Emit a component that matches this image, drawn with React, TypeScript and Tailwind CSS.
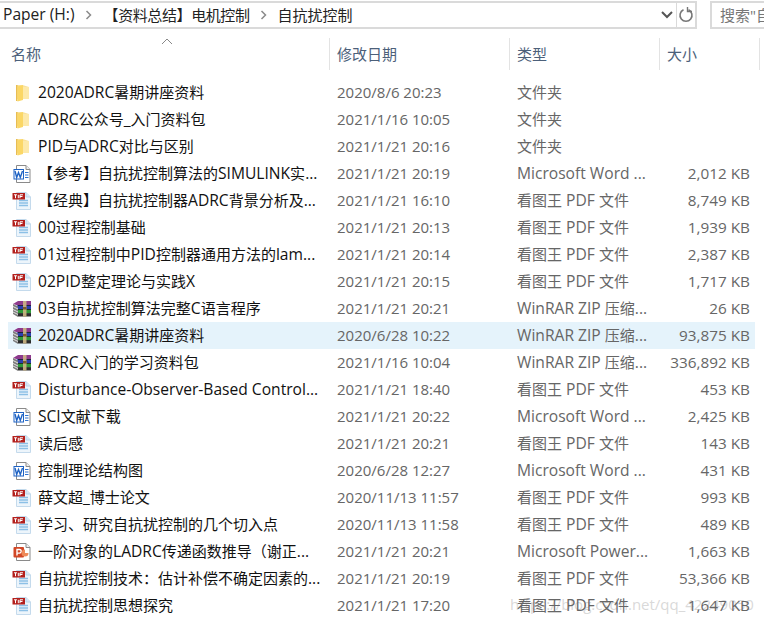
type Kind = "folder" | "word" | "pdf" | "rar" | "ppt";

interface FileRow {
  name: string;
  date: string;
  type: string;
  size?: string;
  kind: Kind;
  selected?: boolean;
}

const PDF = "看图王 PDF 文件";
const WORD = "Microsoft Word ...";
const ZIP = "WinRAR ZIP 压缩...";

const files: FileRow[] = [
  { name: "2020ADRC暑期讲座资料", date: "2020/8/6 20:23", type: "文件夹", kind: "folder" },
  { name: "ADRC公众号_入门资料包", date: "2021/1/16 10:05", type: "文件夹", kind: "folder" },
  { name: "PID与ADRC对比与区别", date: "2021/1/21 20:16", type: "文件夹", kind: "folder" },
  { name: "【参考】自抗扰控制算法的SIMULINK实...", date: "2021/1/21 20:19", type: WORD, size: "2,012 KB", kind: "word" },
  { name: "【经典】自抗扰控制器ADRC背景分析及...", date: "2021/1/21 16:10", type: PDF, size: "8,749 KB", kind: "pdf" },
  { name: "00过程控制基础", date: "2021/1/21 20:13", type: PDF, size: "1,939 KB", kind: "pdf" },
  { name: "01过程控制中PID控制器通用方法的lam...", date: "2021/1/21 20:14", type: PDF, size: "2,387 KB", kind: "pdf" },
  { name: "02PID整定理论与实践X", date: "2021/1/21 20:15", type: PDF, size: "1,717 KB", kind: "pdf" },
  { name: "03自抗扰控制算法完整C语言程序", date: "2021/1/21 20:21", type: ZIP, size: "26 KB", kind: "rar" },
  { name: "2020ADRC暑期讲座资料", date: "2020/6/28 10:22", type: ZIP, size: "93,875 KB", kind: "rar", selected: true },
  { name: "ADRC入门的学习资料包", date: "2021/1/16 10:04", type: ZIP, size: "336,892 KB", kind: "rar" },
  { name: "Disturbance-Observer-Based Control...", date: "2021/1/21 18:40", type: PDF, size: "453 KB", kind: "pdf" },
  { name: "SCI文献下载", date: "2021/1/21 20:22", type: WORD, size: "2,425 KB", kind: "word" },
  { name: "读后感", date: "2021/1/21 20:21", type: PDF, size: "143 KB", kind: "pdf" },
  { name: "控制理论结构图", date: "2020/6/28 12:27", type: WORD, size: "431 KB", kind: "word" },
  { name: "薛文超_博士论文", date: "2020/11/13 11:57", type: PDF, size: "993 KB", kind: "pdf" },
  { name: "学习、研究自抗扰控制的几个切入点", date: "2020/11/13 11:58", type: PDF, size: "489 KB", kind: "pdf" },
  { name: "一阶对象的LADRC传递函数推导（谢正...", date: "2021/1/21 20:21", type: "Microsoft Power...", size: "1,663 KB", kind: "ppt" },
  { name: "自抗扰控制技术：估计补偿不确定因素的...", date: "2021/1/21 20:19", type: PDF, size: "53,366 KB", kind: "pdf" },
  { name: "自抗扰控制思想探究", date: "2021/1/21 17:20", type: PDF, size: "1,647 KB", kind: "pdf" },
];

// latin runs sit a little wider than the CJK ones in the original UI font
function Mixed({ text }: { text: string }) {
  const parts = text.split(/([\x20-\x7e]+)/).filter(Boolean);
  return (
    <span>
      {parts.map((p, i) =>
        /^[\x20-\x7e]/.test(p) ? (
          <span key={i} className="text-[15.6px]">
            {p}
          </span>
        ) : (
          <span key={i}>{p}</span>
        ),
      )}
    </span>
  );
}

function FileIcon({ kind }: { kind: Kind }) {
  if (kind === "folder") {
    return (
      <svg width="20" height="20" viewBox="0 0 20 20">
        <path d="M4 2h6.500l6.500 2v12H4z" fill="#f9e29b" />
        <path d="M4 2h1.500v16H4z" fill="#e8bd52" />
        <path d="M5.500 3.500l5.500-1.500v15l-5.500 1.500z" fill="#fbd766" />
        <path d="M11 4h6v12h-6z" fill="#fde9a9" />
      </svg>
    );
  }
  if (kind === "rar") {
    return (
      <svg width="20" height="20" viewBox="0 0 20 20">
        <path d="M1 5l5-3h13v4.500H6z" fill="#8e3a8c" />
        <path d="M1 9l5-3h13v4.500H6z" fill="#2b3fae" />
        <path d="M1 13l5-3h13v4.500H6z" fill="#2f9a3a" />
        <path d="M1 5v10l5 3V7.500z" fill="#7d7d7d" />
        <path d="M1 7.500l5 2.500M1 10.500l5 2.500M1 13l5 2.500" stroke="#ececec" strokeWidth="0.9" />
        <path d="M6 6.500h13M6 10.500h13M6 14.500h13" stroke="#1d1d1d" strokeWidth="0.8" />
        <path d="M6 15h13v2.500H6z" fill="#2c2c2c" />
        <path d="M11 2h3.500v15.500H11z" fill="#cdb784" opacity="0.9" />
        <path d="M11 8h3.500v2.500H11z" fill="#7a5a2c" />
      </svg>
    );
  }
  if (kind === "pdf") {
    return (
      <svg width="20" height="20" viewBox="0 0 20 20">
        <path d="M4.500 1.500h9.500l4.500 4.500v12.500h-14z" fill="#edf5fb" stroke="#c4daec" />
        <path d="M14 1.500v4.500h4.500" fill="#d8e8f5" stroke="#bcd5ea" />
        <path d="M7 9.500h9M7 12h9M7 14.500h9" stroke="#8cc0e6" strokeWidth="1.300" />
        <rect x="0.500" y="2" width="12.500" height="6.500" fill="#b3201d" />
        <path d="M2 3.800h3M3.500 3.800v3.400M6.300 3.800v3.400M8 3.800v3.400M8 3.800h3M8 5.500h2.500" stroke="#fff" strokeWidth="1" />
      </svg>
    );
  }
  if (kind === "word") {
    return (
      <svg width="20" height="20" viewBox="0 0 20 20">
        <path d="M4.500 1.500h9.500l4 4v13h-13.500z" fill="#fff" stroke="#8a8a8a" />
        <path d="M14 1.500v4h4" fill="#eee" stroke="#8a8a8a" />
        <rect x="1.500" y="5" width="10.500" height="10.500" fill="#1f63c4" />
        <rect x="2.500" y="6" width="8.500" height="8.500" fill="#fff" />
        <path d="M3 7l1.700 6.500L6.500 8.500l1.800 5L10.500 7" fill="none" stroke="#1f63c4" strokeWidth="1.400" />
        <path d="M13 8.500h3.500M13 11h3.500M13 13.500h3.500" stroke="#2f73cf" />
      </svg>
    );
  }
  return (
    <svg width="20" height="20" viewBox="0 0 20 20">
      <path d="M4.500 1.500h9.500l4 4v13h-13.500z" fill="#fff" stroke="#8a8a8a" />
      <path d="M14 1.500v4h4" fill="#eee" stroke="#8a8a8a" />
      <rect x="1.500" y="5" width="10.500" height="10.500" rx="1" fill="#d24726" />
      <path d="M5 13.500V7.500h2.400a1.800 1.800 0 010 3.600H5" fill="none" stroke="#fff" strokeWidth="1.400" />
      <path d="M13 7.500a3.500 3.500 0 103.500 3.500H13z" fill="#ee8a5a" />
    </svg>
  );
}

function Chevron() {
  return (
    <svg width="8" height="12" viewBox="0 0 8 12" className="text-[#8a8a8a]">
      <path d="M1.500 2l4 4-4 4" fill="none" stroke="currentColor" strokeWidth="1.500" />
    </svg>
  );
}

export default function App() {
  return (
    <div
      className="relative h-[621px] w-[764px] overflow-hidden bg-white text-[15px] leading-[27px] text-[#111]"
      style={{ fontFamily: '"Open Sans", "Noto Sans CJK SC", sans-serif' }}
    >
      {/* blog watermark, sits under the last row */}
      <div className="absolute top-[593px] left-[510px] text-[15px] leading-[22px] whitespace-nowrap text-[#c8c8c8]/70">
        https://blog.csdn.net/qq_42249050
      </div>

      {/* address bar and search box */}
      <div className="flex h-[29px] items-stretch pt-px">
        <div className="ml-[-1px] flex w-[698px] shrink-0 items-center border-y-2 border-r-2 border-[#dadada]">
          <div className="flex flex-1 items-center pl-[4px] text-[15px] leading-none text-[#222]">
            <Mixed text="Paper (H:)" />
            <span className="ml-[10px] mr-[11px]"><Chevron /></span>
            <span className="tracking-[-0.4px]">【资料总结】电机控制</span>
            <span className="ml-[10px] mr-[10px]"><Chevron /></span>
            <span>自抗扰控制</span>
          </div>
          <svg width="14" height="10" viewBox="0 0 14 10" className="mr-[2px] text-[#555]">
            <path d="M2 2l5 5 5-5" fill="none" stroke="currentColor" strokeWidth="2" />
          </svg>
          <div className="flex h-full w-[19px] items-center justify-center border-l border-[#dadada]">
            <svg width="16" height="16" viewBox="0 0 16 16" className="text-[#777]">
              <path d="M10.500 2.800a6 6 0 11-5 0" fill="none" stroke="currentColor" strokeWidth="1.600" />
              <path d="M4 0.500v4.500h4.500" fill="none" stroke="currentColor" strokeWidth="1.400" transform="translate(5.500 -0.500)" />
            </svg>
          </div>
        </div>
        <div className="ml-[13px] flex min-w-0 flex-1 items-center overflow-hidden border-y-2 border-l-2 border-[#dadada] pl-[8px] text-[15px] whitespace-nowrap text-[#777]">
          搜索"自
        </div>
      </div>

      {/* column headers */}
      <div className="relative mt-[9px] flex h-[32px] items-center text-[15px] text-[#4c607a]">
        <svg width="12" height="7" viewBox="0 0 12 7" className="absolute top-0 left-[161px] text-[#888]">
          <path d="M1 6l5-5 5 5" fill="none" stroke="currentColor" />
        </svg>
        <div className="w-[329px] pl-[11px]">名称</div>
        <div className="h-full w-[180px] border-l border-[#e3e3e3] pl-[7px] leading-[32px]">修改日期</div>
        <div className="h-full w-[150px] border-l border-[#e3e3e3] pl-[7px] leading-[32px]">类型</div>
        <div className="h-full w-[100px] border-l border-[#e3e3e3] pl-[7px] leading-[32px]">大小</div>
        <div className="h-full border-l border-[#e3e3e3]" />
      </div>

      {/* rows */}
      <div className="relative mt-[9px]">
        {files.map((f) => (
          <div
            key={f.name + f.date}
            className={`ml-[8px] flex h-[27px] w-[747px] items-center whitespace-nowrap ${f.selected ? "bg-[#e5f3fb]" : ""}`}
          >
            <div className="flex w-[321px] items-center">
              <span className="ml-[4px] flex w-[26px] shrink-0">
                <FileIcon kind={f.kind} />
              </span>
              <Mixed text={f.name} />
            </div>
            <div className="w-[180px] pl-[8px] text-[#666]">{f.date}</div>
            <div className="w-[150px] pl-[8px] text-[#666]">
              <Mixed text={f.type} />
            </div>
            <div className="w-[91px] text-right text-[15.3px] text-[#666]">{f.size}</div>
          </div>
        ))}
      </div>
    </div>
  );
}
